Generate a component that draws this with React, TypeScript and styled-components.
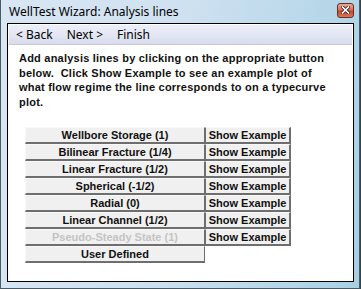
import React from "react";
import styled, { createGlobalStyle } from "styled-components";

const GlobalStyle = createGlobalStyle`
  html, body {
    margin: 0;
    padding: 0;
    background: #34444c;
    width: 361px;
    height: 289px;
    overflow: hidden;
  }
`;

const Window = styled.div`
  width: 358px;
  height: 288px;
  border-left: 1px solid #4b5b66;
  border-right: 1px solid #4b5b66;
  border-bottom: 1px solid #4b5b66;
  background: linear-gradient(100deg, #d9e6f3 0%, #cfe1f1 45%, #b3d6e8 85%, #a7cfe3 100%);
  display: flex;
  flex-direction: column;
`;

const TitleBar = styled.div`
  height: 23px;
  display: flex;
  align-items: center;
  justify-content: space-between;
  padding: 0 5px 0 8px;
  font-family: "Noto Sans", "Open Sans", sans-serif;
  font-size: 12px;
  color: #000;
`;

const CloseButton = styled.div`
  width: 15px;
  height: 13px;
  margin-bottom: 3px;
  border: 1px solid #6d2e22;
  border-radius: 3px;
  background: linear-gradient(#eba897 0%, #d97059 45%, #c4462c 55%, #d8785c 100%);
  display: flex;
  align-items: center;
  justify-content: center;
`;

const Client = styled.div`
  flex: 1;
  margin: 0 5px 6px 6px;
  border: 1px solid #000;
  background: #fff;
  display: flex;
  flex-direction: column;
`;

const Toolbar = styled.div`
  margin: 1px 1px 0 1px;
  height: 19px;
  border-bottom: 1px solid #c5c9da;
  background: linear-gradient(#eceef8 0%, #e4e7f3 50%, #d7dbec 100%);
  display: flex;
  align-items: center;
  gap: 14px;
  padding-left: 7px;
  font-family: "Noto Sans", "Open Sans", sans-serif;
  font-size: 12px;
  color: #000;
`;

const ToolItem = styled.span`
  cursor: default;
`;

const Instructions = styled.p`
  margin: 6px 0 0 11px;
  width: 320px;
  font-family: "Liberation Sans", Arial, sans-serif;
  font-weight: bold;
  font-size: 11px;
  letter-spacing: 0.22px;
  line-height: 14.7px;
  color: #111;
`;

const LineTable = styled.div`
  margin: 17px 0 0 17px;
  display: grid;
  grid-template-columns: 180px 86px;
  grid-auto-rows: 17px;
`;

const LineButton = styled.div<{ $disabled?: boolean }>`
  box-sizing: border-box;
  background: #f0f0f0;
  border-top: 1px solid #f8f8f8;
  border-left: 1px solid #f8f8f8;
  border-right: 1px solid #6e6e6e;
  border-bottom: 2px solid #6e6e6e;
  display: flex;
  align-items: center;
  justify-content: center;
  font-family: "Liberation Sans", Arial, sans-serif;
  font-weight: bold;
  font-size: 11px;
  color: ${(p) => (p.$disabled ? "#c4c4c4" : "#111")};
  white-space: nowrap;
`;

const ExampleButton = styled(LineButton)`
  border-left: 1px solid #6e6e6e;
  border-right: 2px solid #6e6e6e;
`;

const lines = [
  { label: "Wellbore Storage (1)", example: true },
  { label: "Bilinear Fracture (1/4)", example: true },
  { label: "Linear Fracture (1/2)", example: true },
  { label: "Spherical (-1/2)", example: true },
  { label: "Radial (0)", example: true },
  { label: "Linear Channel (1/2)", example: true },
  { label: "Pseudo-Steady State (1)", example: true, disabled: true },
  { label: "User Defined", example: false },
];

export default function App() {
  return (
    <>
      <GlobalStyle />
      <Window>
        <TitleBar>
          <span>WellTest Wizard: Analysis lines</span>
          <CloseButton>
            <svg width="9" height="8" viewBox="0 0 9 8">
              <path
                d="M1.5 1 L7.5 7 M7.5 1 L1.5 7"
                stroke="#3a2a28"
                strokeWidth="3.2"
                strokeLinecap="square"
              />
              <path
                d="M1.5 1 L7.5 7 M7.5 1 L1.5 7"
                stroke="#fff"
                strokeWidth="1.6"
                strokeLinecap="square"
              />
            </svg>
          </CloseButton>
        </TitleBar>
        <Client>
          <Toolbar>
            <ToolItem>&lt; Back</ToolItem>
            <ToolItem>Next &gt;</ToolItem>
            <ToolItem>Finish</ToolItem>
          </Toolbar>
          <Instructions>
            Add analysis lines by clicking on the appropriate button below.&nbsp; Click Show
            Example to see an example plot of what flow regime the line corresponds to on a
            typecurve plot.
          </Instructions>
          <LineTable>
            {lines.map((l) => (
              <React.Fragment key={l.label}>
                <LineButton $disabled={l.disabled}>{l.label}</LineButton>
                {l.example ? <ExampleButton>Show Example</ExampleButton> : <span />}
              </React.Fragment>
            ))}
          </LineTable>
        </Client>
      </Window>
    </>
  );
}
